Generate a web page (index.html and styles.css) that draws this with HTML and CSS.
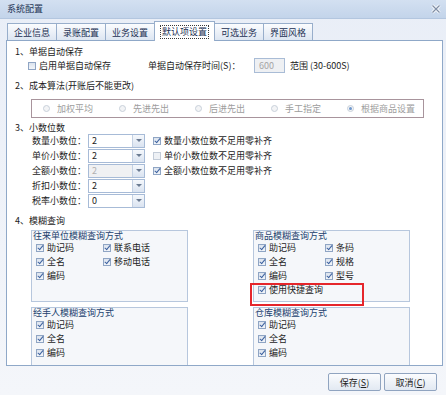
FILE: index.html
```html
<!DOCTYPE html>
<html lang="zh-CN">

<head>
  <meta charset="UTF-8">
  <title>系统配置</title>
  <link rel="stylesheet" href="styles.css">
</head>

<body>
  <div class="dialog">
    <div class="titlebar">
      <span class="title">系统配置</span>
      <svg class="close" width="10" height="10" viewBox="0 0 10 10">
        <path d="M1.5 1.5 L8.5 8.5 M8.5 1.5 L1.5 8.5" stroke="#fff" stroke-width="3" />
        <path d="M1.5 1.5 L8.5 8.5 M8.5 1.5 L1.5 8.5" stroke="#7f8ea6" stroke-width="1.3" />
      </svg>
    </div>

    <div class="tabs">
      <span class="tab">企业信息</span>
      <span class="tab">录账配置</span>
      <span class="tab">业务设置</span>
      <span class="tab active"><span class="focus">默认项设置</span></span>
      <span class="tab">可选业务</span>
      <span class="tab">界面风格</span>
    </div>

    <div class="panel">
      <div class="heading">1、单据自动保存</div>
      <div class="autosave">
        <label class="check auto-check"><span class="cb"></span>启用单据自动保存</label>
        <span class="time-label">单据自动保存时间(S)：</span>
        <span class="textbox">600</span>
        <span>范围 (30-600S)</span>
      </div>

      <div class="heading">2、成本算法(开账后不能更改)</div>
      <div class="radio-box">
        <label class="radio"><span class="rb"></span>加权平均</label>
        <label class="radio"><span class="rb"></span>先进先出</label>
        <label class="radio"><span class="rb"></span>后进先出</label>
        <label class="radio"><span class="rb"></span>手工指定</label>
        <label class="radio"><span class="rb on"></span>根据商品设置</label>
      </div>

      <div class="heading heading-3">3、小数位数</div>
      <div class="decimals">
        <div class="dec-row">
          <span class="dec-label">数量小数位：</span>
          <span class="select"><span class="val">2</span><span class="drop"></span></span>
          <label class="check"><span class="cb on"></span>数量小数位数不足用零补齐</label>
        </div>
        <div class="dec-row">
          <span class="dec-label">单价小数位：</span>
          <span class="select"><span class="val">2</span><span class="drop"></span></span>
          <label class="check"><span class="cb off"></span>单价小数位数不足用零补齐</label>
        </div>
        <div class="dec-row">
          <span class="dec-label">全额小数位：</span>
          <span class="select disabled"><span class="val">2</span><span class="drop"></span></span>
          <label class="check"><span class="cb on"></span>全额小数位数不足用零补齐</label>
        </div>
        <div class="dec-row">
          <span class="dec-label">折扣小数位：</span>
          <span class="select"><span class="val">2</span><span class="drop"></span></span>
        </div>
        <div class="dec-row">
          <span class="dec-label">税率小数位：</span>
          <span class="select"><span class="val">0</span><span class="drop"></span></span>
        </div>
      </div>

      <div class="heading heading-4">4、模糊查询</div>
      <div class="fuzzy">
        <div class="group">
          <div class="group-title">往来单位模糊查询方式</div>
          <div class="group-items">
            <label class="check"><span class="cb on"></span>助记码</label>
            <label class="check"><span class="cb on"></span>联系电话</label>
            <label class="check"><span class="cb on"></span>全名</label>
            <label class="check"><span class="cb on"></span>移动电话</label>
            <label class="check"><span class="cb on"></span>编码</label>
          </div>
        </div>

        <div class="group">
          <div class="group-title">商品模糊查询方式</div>
          <div class="group-items">
            <label class="check"><span class="cb on"></span>助记码</label>
            <label class="check"><span class="cb on"></span>条码</label>
            <label class="check"><span class="cb on"></span>全名</label>
            <label class="check"><span class="cb on"></span>规格</label>
            <label class="check"><span class="cb on"></span>编码</label>
            <label class="check"><span class="cb on"></span>型号</label>
            <label class="check wide"><span class="cb on"></span>使用快捷查询</label>
          </div>
          <div class="mark"></div>
        </div>

        <div class="group">
          <div class="group-title">经手人模糊查询方式</div>
          <div class="group-items single">
            <label class="check"><span class="cb on"></span>助记码</label>
            <label class="check"><span class="cb on"></span>全名</label>
            <label class="check"><span class="cb on"></span>编码</label>
          </div>
        </div>

        <div class="group">
          <div class="group-title">仓库模糊查询方式</div>
          <div class="group-items single">
            <label class="check"><span class="cb on"></span>助记码</label>
            <label class="check"><span class="cb on"></span>全名</label>
            <label class="check"><span class="cb on"></span>编码</label>
          </div>
        </div>
      </div>
    </div>

    <div class="footer">
      <button class="btn">保存(<u>S</u>)</button>
      <button class="btn">取消(<u>C</u>)</button>
    </div>
  </div>
</body>

</html>
```

FILE: styles.css
```css
body {
  margin: 0;
  font-family: "Noto Sans CJK SC", "Liberation Sans", sans-serif;
  font-size: 9px;
  color: #1c1c1c;
  background-color: #eef2f8;
}

.dialog {
  width: 446px;
  height: 395px;
  overflow: hidden;
  background: linear-gradient(#e9eef7, #f4f6fa);
}

/* title bar */
.titlebar {
  height: 18px;
  display: flex;
  align-items: center;
  justify-content: space-between;
  padding: 0 5px 0 7px;
  background: linear-gradient(#d3e0f1, #c3d4ea);
  border-bottom: 1px solid #b3c6df;
}

.title {
  color: #1f3455;
  line-height: 12px;
}

/* tabs */
.tabs {
  height: 21px;
  box-sizing: border-box;
  display: flex;
  align-items: flex-end;
  padding-left: 7px;
}

.tab {
  height: 17px;
  box-sizing: border-box;
  padding: 0 6px;
  display: flex;
  align-items: center;
  color: #1b2f52;
  border: 1px solid #98aecb;
  border-bottom: none;
  margin-right: -1px;
  background: linear-gradient(#fbfcfe, #dde6f2);
}

.tab.active {
  height: 20px;
  margin-bottom: -1px;
  position: relative;
  z-index: 1;
  background: #fff;
}

.focus {
  outline: 1px dotted #3a3a3a;
  line-height: 12px;
  padding: 0 1px;
}

/* content panel */
.panel {
  width: 437px;
  height: 326px;
  margin-left: 6px;
  box-sizing: border-box;
  border: 1px solid #8fa8c8;
  background: #fff;
  overflow: hidden;
  padding: 5px 0 0 8px;
}

.heading {
  line-height: 11px;
  height: 11px;
}

.heading-3 {
  margin-top: 4px;
}

.heading-4 {
  margin-top: 7px;
  height: 12px;
  line-height: 12px;
}

.autosave {
  height: 15px;
  display: flex;
  align-items: center;
  margin: 1px 0 7px 13px;
}

.check {
  display: flex;
  align-items: center;
  line-height: 14px;
  white-space: nowrap;
}

.auto-check {
  width: 120px;
}

.time-label {
  width: 106px;
}

.textbox {
  width: 31px;
  height: 15px;
  box-sizing: border-box;
  border: 1px solid #a9bcd6;
  background: #eef0f3;
  color: #a5a5a5;
  padding-left: 4px;
  line-height: 13px;
  margin-right: 5px;
}

/* check box and radio */
.cb {
  width: 8px;
  height: 8px;
  box-sizing: border-box;
  border: 1px solid #8fa5c4;
  background: linear-gradient(#dbe3ee, #f2f5f9);
  margin-right: 3px;
  position: relative;
  flex: none;
}

.cb.off {
  border-color: #c3ccd8;
  background: #eef1f5;
}

.cb.on::after {
  content: "";
  position: absolute;
  left: 2px;
  top: -1px;
  width: 2px;
  height: 5px;
  border: solid #3d62a0;
  border-width: 0 1.4px 1.4px 0;
  transform: rotate(40deg);
}

.radio-box {
  margin: 8px 0 0 16px;
  width: 393px;
  height: 19px;
  box-sizing: border-box;
  border: 1px solid #a8949c;
  display: flex;
  align-items: center;
  padding-left: 11px;
}

.radio {
  width: 76px;
  display: flex;
  align-items: center;
  color: #9d9d9d;
  white-space: nowrap;
}

.rb {
  width: 7px;
  height: 7px;
  box-sizing: border-box;
  border-radius: 50%;
  border: 1px solid #c8d0da;
  background: #f3f4f6;
  margin-right: 7px;
  display: flex;
  align-items: center;
  justify-content: center;
}

.rb.on::after {
  content: "";
  width: 3px;
  height: 3px;
  border-radius: 50%;
  background: #6f97cc;
}

/* decimal places */
.decimals {
  margin-left: 17px;
}

.dec-row {
  height: 15px;
  display: flex;
  align-items: center;
}

.dec-label {
  width: 56px;
}

.select {
  width: 57px;
  height: 14px;
  box-sizing: border-box;
  border: 1px solid #a7bbd7;
  background: #fff;
  display: flex;
  margin-right: 8px;
}

.select.disabled {
  background: #f0f1f3;
  color: #b0b0b0;
}

.val {
  flex: 1;
  padding-left: 3px;
  line-height: 12px;
}

.drop {
  width: 11px;
  border-left: 1px solid #c4d1e3;
  background: linear-gradient(#f5f8fc, #dae3f0);
  display: flex;
  align-items: center;
  justify-content: center;
}

.drop::after {
  content: "";
  border-left: 3px solid transparent;
  border-right: 3px solid transparent;
  border-top: 3px solid #6b7b92;
}

/* fuzzy search groups */
.fuzzy {
  margin: 3px 0 0 16px;
  display: grid;
  grid-template-columns: 157px 157px;
  column-gap: 65px;
  row-gap: 5px;
}

.group {
  height: 72px;
  box-sizing: border-box;
  border: 1px solid #b7c7dd;
  background: #f5f7fa;
  position: relative;
}

.group-title {
  color: #23426f;
  line-height: 10px;
  padding-left: 1px;
}

.group-items {
  display: grid;
  grid-template-columns: 67px auto;
  padding-left: 4px;
}

.group-items.single {
  grid-template-columns: auto;
}

.wide {
  grid-column: 1 / -1;
}

.mark {
  position: absolute;
  left: -4px;
  top: 52px;
  width: 114px;
  height: 23px;
  box-sizing: border-box;
  border: 2px solid #e5262b;
}

/* footer buttons */
.footer {
  display: flex;
  justify-content: flex-end;
  gap: 3px;
  padding: 7px 9px 0 0;
}

.btn {
  width: 53px;
  height: 18px;
  font-family: inherit;
  font-size: 9px;
  color: #222;
  border: 1px solid #90a4c0;
  border-radius: 2px;
  background: linear-gradient(#fbfcfe, #e2e9f2);
  padding: 0;
}
```
